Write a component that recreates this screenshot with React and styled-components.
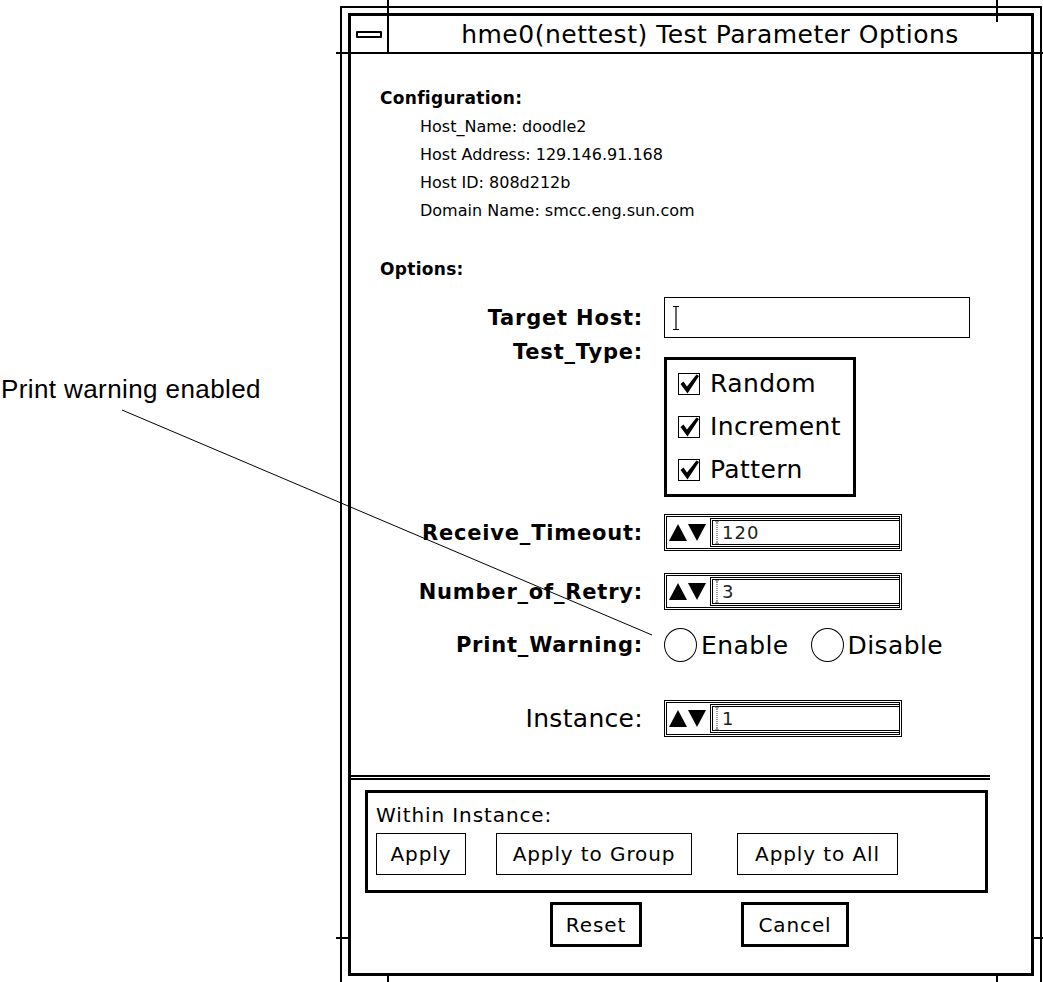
import React from "react";
import styled, { createGlobalStyle } from "styled-components";

const Global = createGlobalStyle`
  html, body { margin: 0; padding: 0; background: #fff; }
  body {
    width: 1043px;
    height: 982px;
    overflow: hidden;
    font-family: "DejaVu Sans", "Liberation Sans", sans-serif;
    color: #000;
  }
`;

const Page = styled.div`
  position: relative;
  width: 1043px;
  height: 982px;
  display: flex;
  align-items: flex-start;
  overflow: hidden;
  background: #fff;
`;

const CalloutColumn = styled.div`
  flex: none;
  width: 340px;
  padding-top: 374px;
  padding-left: 1px;
  box-sizing: border-box;
`;

const CalloutText = styled.div`
  font-family: "Liberation Sans", Arial, sans-serif;
  font-size: 26px;
  line-height: 30px;
  letter-spacing: 0.4px;
  white-space: nowrap;
`;

const LeaderLine = styled.svg`
  position: absolute;
  left: 0;
  top: 0;
  pointer-events: none;
`;

const OuterFrame = styled.div`
  position: relative;
  flex: none;
  margin-top: 6px;
  width: 702px;
  height: 990px;
  box-sizing: border-box;
  border: 2px solid #000;
  padding: 5px 6px;
`;

const Tick = styled.span`
  position: absolute;
  background: #000;
  left: ${(p) => p.$x}px;
  top: ${(p) => p.$y}px;
  width: ${(p) => p.$w}px;
  height: ${(p) => p.$h}px;
`;

const InnerFrame = styled.div`
  height: 963px;
  box-sizing: border-box;
  border: 3px solid #000;
  display: flex;
  flex-direction: column;
  background: #fff;
`;

const TitleBar = styled.div`
  flex: none;
  height: 38px;
  box-sizing: border-box;
  border-bottom: 2px solid #000;
  display: flex;
  align-items: stretch;
`;

const MenuCell = styled.div`
  flex: none;
  width: 38px;
  box-sizing: border-box;
  border-right: 2px solid #000;
  display: flex;
  align-items: center;
  padding-left: 5px;
`;

const MenuGlyph = styled.span`
  display: block;
  width: 26px;
  height: 7px;
  box-sizing: border-box;
  border: 2px solid #000;
  border-radius: 1px;
`;

const TitleText = styled.div`
  flex: 1;
  display: flex;
  align-items: center;
  justify-content: center;
  font-size: 25px;
  letter-spacing: 0.5px;
  white-space: nowrap;
`;

const Body = styled.div`
  flex: none;
  padding-left: 29px;
  display: flex;
  flex-direction: column;
`;

const Heading = styled.div`
  margin-top: ${(p) => p.$mt}px;
  font-size: 17px;
  font-weight: bold;
  line-height: 30px;
  letter-spacing: 0.3px;
`;

const InfoList = styled.div`
  padding-left: 40px;
  display: flex;
  flex-direction: column;
`;

const InfoLine = styled.div`
  font-size: 16px;
  line-height: 28px;
  white-space: nowrap;
`;

const FormRow = styled.div`
  margin-top: ${(p) => p.$mt}px;
  height: ${(p) => p.$h}px;
  display: flex;
  align-items: ${(p) => (p.$top ? "flex-start" : "center")};
  gap: 21px;
`;

const Label = styled.div`
  flex: none;
  width: 263px;
  text-align: right;
  white-space: nowrap;
  font-size: ${(p) => (p.$plain ? "25px" : "21px")};
  font-weight: ${(p) => (p.$plain ? "normal" : "bold")};
  letter-spacing: ${(p) => (p.$plain ? "0.3px" : "0.8px")};
  line-height: 26px;
  margin-top: ${(p) => p.$mt || 0}px;
`;

const TextInput = styled.div`
  width: 306px;
  height: 41px;
  box-sizing: border-box;
  border: 1px solid #000;
  display: flex;
  align-items: center;
  padding-left: 6px;
`;

const CheckGroup = styled.div`
  width: 192px;
  height: 140px;
  box-sizing: border-box;
  border: 3px solid #000;
  padding: 2px 0 0 11px;
  display: flex;
  flex-direction: column;
`;

const CheckItem = styled.div`
  height: 43px;
  display: flex;
  align-items: center;
  gap: 10px;
  font-size: 25px;
  letter-spacing: 0.4px;
  white-space: nowrap;
`;

const SpinBox = styled.div`
  width: 238px;
  height: 37px;
  box-sizing: border-box;
  border: 3px double #000;
  display: flex;
  align-items: center;
  padding: 1px 0 1px 2px;
`;

const Arrows = styled.div`
  flex: none;
  display: flex;
  align-items: center;
  gap: 1px;
  width: 41px;
`;

const SpinField = styled.div`
  flex: 1;
  align-self: stretch;
  box-sizing: border-box;
  border: 3px double #000;
  border-right: none;
  display: flex;
  align-items: center;
  gap: 1px;
  font-size: 18px;
  letter-spacing: 1px;
  color: #222;
`;

const RadioGroup = styled.div`
  display: flex;
  align-items: center;
  gap: 22px;
`;

const RadioOption = styled.div`
  display: flex;
  align-items: center;
  gap: 4px;
  font-size: 25px;
  letter-spacing: 0.4px;
  white-space: nowrap;
`;

const RadioCircle = styled.span`
  display: block;
  width: 33px;
  height: 34px;
  box-sizing: border-box;
  border: 1px solid #000;
  border-radius: 50%;
`;

const Separator = styled.div`
  flex: none;
  margin-top: 38px;
  width: 639px;
  height: 5px;
  box-sizing: border-box;
  border-top: 2px solid #000;
  border-bottom: 2px solid #000;
`;

const GroupBox = styled.div`
  flex: none;
  margin: 10px 0 0 14px;
  width: 623px;
  height: 103px;
  box-sizing: border-box;
  border: 3px solid #000;
  padding: 10px 8px 0;
  display: flex;
  flex-direction: column;
`;

const GroupCaption = styled.div`
  font-size: 20px;
  line-height: 24px;
  letter-spacing: 0.9px;
  white-space: nowrap;
`;

const ButtonRow = styled.div`
  margin-top: 6px;
  display: flex;
`;

const Button = styled.div`
  flex: none;
  width: ${(p) => p.$w}px;
  height: ${(p) => (p.$strong ? 45 : 42)}px;
  margin-left: ${(p) => p.$ml || 0}px;
  box-sizing: border-box;
  border: ${(p) => (p.$strong ? 3 : 1)}px solid #000;
  display: flex;
  align-items: center;
  justify-content: center;
  font-size: 20px;
  letter-spacing: 0.9px;
  white-space: nowrap;
`;

const ActionRow = styled.div`
  flex: none;
  margin-top: 9px;
  padding-left: 199px;
  display: flex;
`;

const IBeam = () => (
  <svg width="10" height="26" viewBox="0 0 10 26">
    <path d="M2 1.5 H8 M5 1.5 V24.5 M2 24.5 H8" stroke="#000" strokeWidth="1.2" fill="none" />
  </svg>
);

const DottedCursor = () => (
  <svg width="8" height="27" viewBox="0 0 8 27">
    <path d="M1.5 1 L4 3.5 L6.5 1 M1.5 26 L4 23.5 L6.5 26" stroke="#333" strokeWidth="1" fill="none" />
    <path d="M4 4 V23" stroke="#333" strokeWidth="1" strokeDasharray="1 1" fill="none" />
  </svg>
);

const CheckBox = () => (
  <svg width="22" height="22" viewBox="0 0 22 22">
    <rect x="0.5" y="0.5" width="21" height="21" fill="#fff" stroke="#000" />
    <path d="M2.5 11 L5.5 8.5 L9 13.5 L18.5 1.5 L21 3 L9.5 20.5 Z" fill="#000" />
  </svg>
);

const UpArrow = () => (
  <svg width="18" height="17" viewBox="0 0 18 17">
    <path d="M9 0 L18 17 H0 Z" fill="#000" />
  </svg>
);

const DownArrow = () => (
  <svg width="18" height="17" viewBox="0 0 18 17">
    <path d="M0 0 H18 L9 17 Z" fill="#000" />
  </svg>
);

const Spin = ({ value }) => (
  <SpinBox>
    <Arrows>
      <UpArrow />
      <DownArrow />
    </Arrows>
    <SpinField>
      <DottedCursor />
      <span>{value}</span>
    </SpinField>
  </SpinBox>
);

export default function App() {
  return (
    <>
      <Global />
      <Page>
        <CalloutColumn>
          <CalloutText>Print warning enabled</CalloutText>
        </CalloutColumn>
        <OuterFrame>
          <Tick $x={45} $y={-8} $w={2} $h={24} />
          <Tick $x={654} $y={-8} $w={2} $h={22} />
          <Tick $x={-6} $y={44} $w={13} $h={2} />
          <Tick $x={-6} $y={929} $w={13} $h={2} />
          <Tick $x={689} $y={44} $w={14} $h={2} />
          <Tick $x={689} $y={929} $w={14} $h={2} />
          <Tick $x={45} $y={966} $w={2} $h={20} />
          <Tick $x={654} $y={966} $w={2} $h={20} />
          <InnerFrame>
            <TitleBar>
              <MenuCell>
                <MenuGlyph />
              </MenuCell>
              <TitleText>hme0(nettest) Test Parameter Options</TitleText>
            </TitleBar>
            <Body>
              <Heading $mt={29}>Configuration:</Heading>
              <InfoList>
                <InfoLine>Host_Name: doodle2</InfoLine>
                <InfoLine>Host Address: 129.146.91.168</InfoLine>
                <InfoLine>Host ID: 808d212b</InfoLine>
                <InfoLine>Domain Name: smcc.eng.sun.com</InfoLine>
              </InfoList>
              <Heading $mt={29}>Options:</Heading>

              <FormRow $mt={13} $h={41}>
                <Label>Target Host:</Label>
                <TextInput>
                  <IBeam />
                </TextInput>
              </FormRow>

              <FormRow $mt={19} $h={140} $top>
                <Label $mt={-18}>Test_Type:</Label>
                <CheckGroup>
                  <CheckItem>
                    <CheckBox />
                    Random
                  </CheckItem>
                  <CheckItem>
                    <CheckBox />
                    Increment
                  </CheckItem>
                  <CheckItem>
                    <CheckBox />
                    Pattern
                  </CheckItem>
                </CheckGroup>
              </FormRow>

              <FormRow $mt={17} $h={37}>
                <Label>Receive_Timeout:</Label>
                <Spin value="120" />
              </FormRow>

              <FormRow $mt={22} $h={37}>
                <Label>Number_of_Retry:</Label>
                <Spin value="3" />
              </FormRow>

              <FormRow $mt={18} $h={34}>
                <Label>Print_Warning:</Label>
                <RadioGroup>
                  <RadioOption>
                    <RadioCircle />
                    Enable
                  </RadioOption>
                  <RadioOption>
                    <RadioCircle />
                    Disable
                  </RadioOption>
                </RadioGroup>
              </FormRow>

              <FormRow $mt={38} $h={37}>
                <Label $plain>Instance:</Label>
                <Spin value="1" />
              </FormRow>
            </Body>

            <Separator />

            <GroupBox>
              <GroupCaption>Within Instance:</GroupCaption>
              <ButtonRow>
                <Button $w={90}>Apply</Button>
                <Button $w={196} $ml={30}>Apply to Group</Button>
                <Button $w={161} $ml={45}>Apply to All</Button>
              </ButtonRow>
            </GroupBox>

            <ActionRow>
              <Button $w={92} $strong>Reset</Button>
              <Button $w={108} $ml={99} $strong>Cancel</Button>
            </ActionRow>
          </InnerFrame>
        </OuterFrame>
        <LeaderLine width="1043" height="982" viewBox="0 0 1043 982">
          <line x1="122" y1="410" x2="652" y2="635" stroke="#000" strokeWidth="1" />
        </LeaderLine>
      </Page>
    </>
  );
}
